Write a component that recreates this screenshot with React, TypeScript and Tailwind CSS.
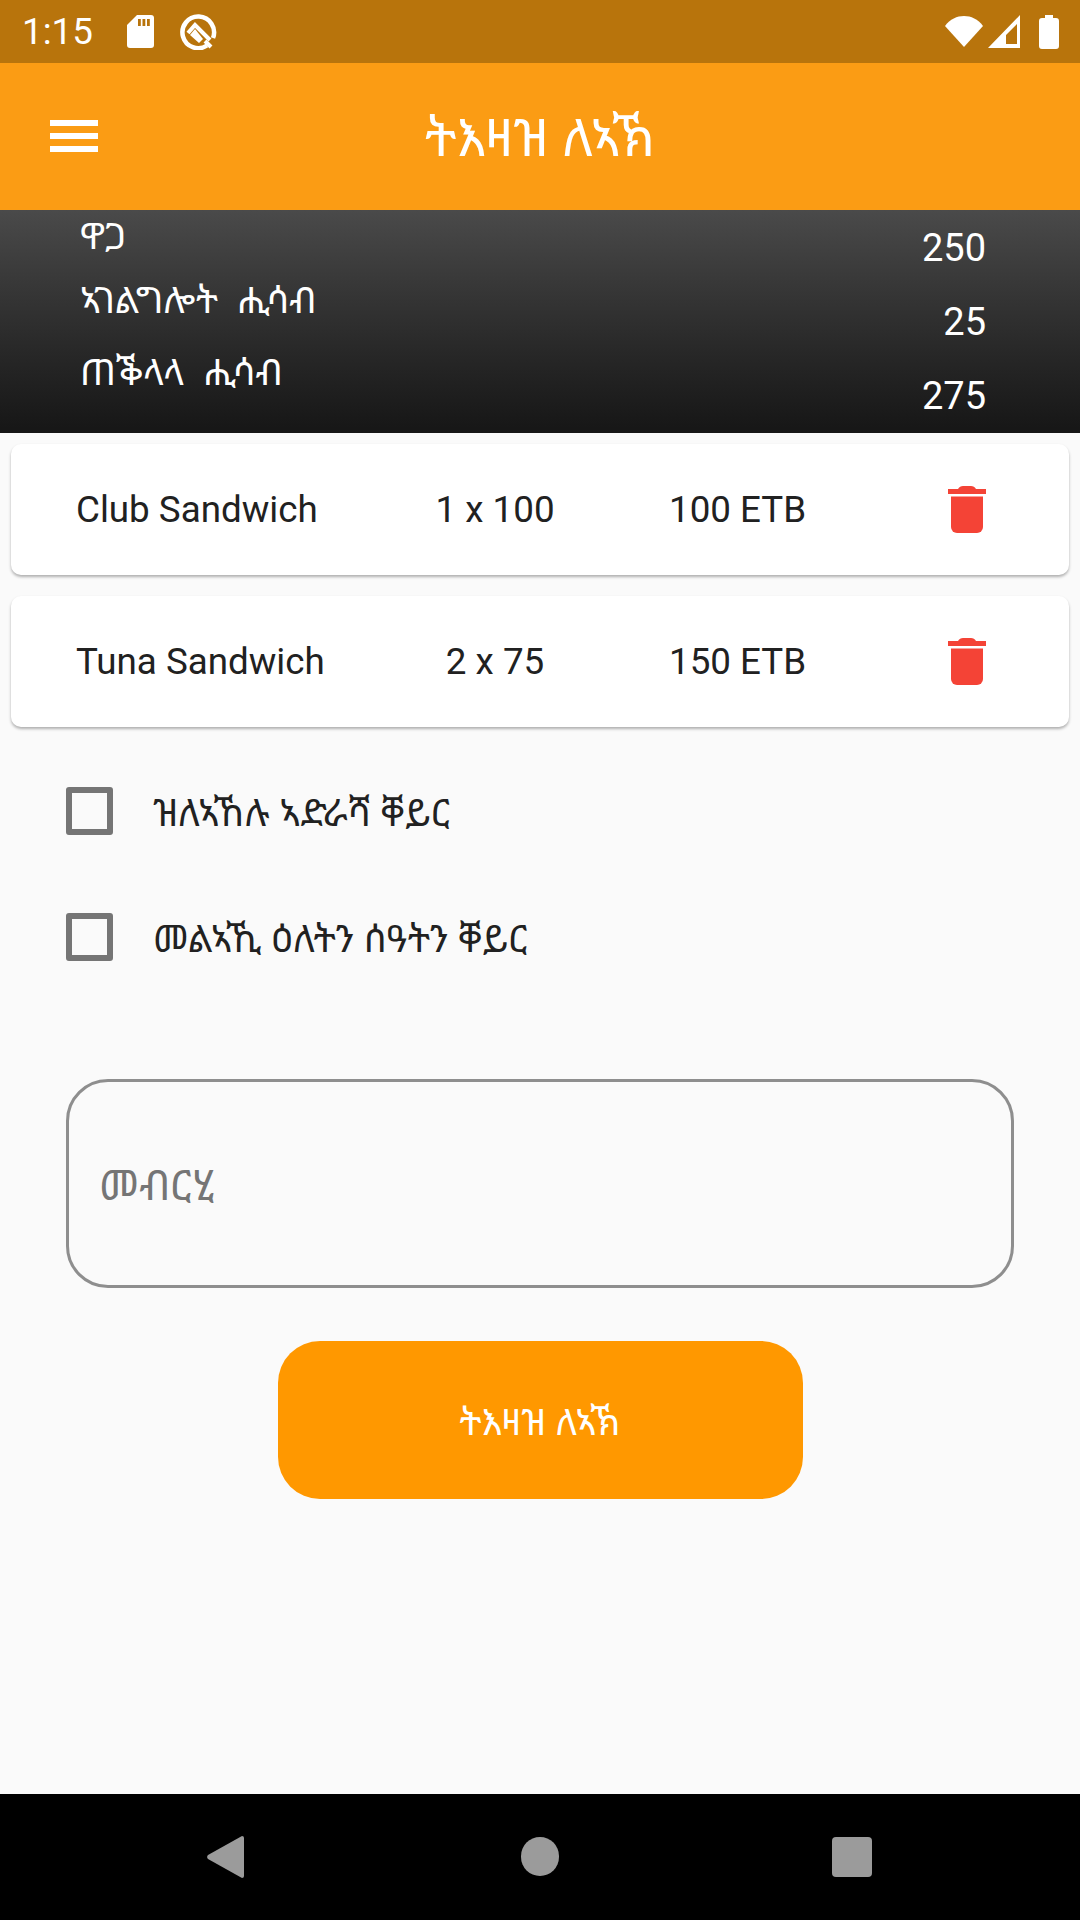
import React from "react";

const ETH = { fontFamily: '"Noto Sans Ethiopic","Abyssinica SIL","DejaVu Sans","Noto Sans",sans-serif' };

function Trash() {
  return (
    <svg width="38" height="47" viewBox="0 0 38 47" fill="#f44336">
      <path d="M0 3h10c1-2 3-3 5-3h8c2 0 4 1 5 3h10v5H0z" />
      <path d="M3 10.500h32V41a6 6 0 0 1-6 6H9a6 6 0 0 1-6-6z" />
    </svg>
  );
}

function Item({ name, qty, total }: { name: string; qty: string; total: string }) {
  return (
    <div className="h-[131px] bg-white rounded-[10px] shadow-[0_2px_3px_rgba(0,0,0,0.3)] flex items-center text-[36.75px] text-[#212121] font-['Roboto',sans-serif]">
      <div className="w-[367px] pl-[65px]">{name}</div>
      <div className="w-[234px] text-center">{qty}</div>
      <div className="w-[336px] pl-[57px]">{total}</div>
      <Trash />
    </div>
  );
}

function Check({ label }: { label: string }) {
  return (
    <div className="flex items-center h-[48px] pl-[66px]">
      <div className="w-[47px] h-[48px] border-[6px] border-[#757575] rounded-[3px]" />
      <div className="ml-[40px] mt-[2px] text-[37.3px] text-[#212121]" style={ETH}>{label}</div>
    </div>
  );
}

export default function App() {
  return (
    <div className="w-[1080px] h-[1920px] flex flex-col bg-[#fafafa] overflow-hidden">
      <div className="h-[63px] bg-[#b8740c] flex items-center justify-between pl-[22px] pr-[21px] text-white">
        <div className="flex items-center">
          <span className="text-[36.75px] font-['Roboto',sans-serif] w-[105px]">1:15</span>
          <svg width="27" height="33" viewBox="0 0 27 33" fill="#fff">
            <path d="M10 0h14a3 3 0 0 1 3 3v27a3 3 0 0 1-3 3H3a3 3 0 0 1-3-3V10z" />
            <path d="M11 4h2.800v7H11zM15.500 4h2.800v7h-2.800zM20 4h2.800v7H20z" fill="#b8740c" />
          </svg>
          <svg className="ml-[26px]" width="37" height="37" viewBox="0 0 37 37" fill="none" stroke="#fff">
            <path d="M27 32.500A15.800 15.800 0 1 1 33 25" strokeWidth="4.500" />
            <path d="M8 20 15 12 30 27" strokeWidth="4" />
            <path d="M10 22l5-6 8 10-4 4z" fill="#fff" strokeWidth="0" />
            <path d="M25 28l6 6" strokeWidth="4" />
          </svg>
        </div>
        <div className="flex items-center">
          <svg width="38" height="31" viewBox="0 0 38 31" fill="#fff"><path d="M0 10C5 3 12 0 19 0s14 3 19 10L19 31z" /></svg>
          <svg className="ml-[5px]" width="32" height="33" viewBox="0 0 32 33" fill="#fff"><path fillRule="evenodd" d="M32 0v33H0zM29 9 18 20v9h11z" /></svg>
          <svg className="ml-[19px]" width="20" height="34" viewBox="0 0 20 34" fill="#fff"><path d="M6 0h8v3h3a3 3 0 0 1 3 3v25a3 3 0 0 1-3 3H3a3 3 0 0 1-3-3V6a3 3 0 0 1 3-3h3z" /></svg>
        </div>
      </div>

      <div className="h-[147px] bg-[#fb9c14] relative flex items-center justify-center text-white">
        <div className="absolute left-[50px] top-[57px] w-[48px] flex flex-col gap-[7px]">
          <div className="h-[6px] bg-white" />
          <div className="h-[6px] bg-white" />
          <div className="h-[6px] bg-white" />
        </div>
        <div className="text-[52.5px]" style={ETH}>ትእዛዝ ለኣኽ</div>
      </div>

      <div className="h-[223px] bg-gradient-to-b from-[#4a4a4a] to-[#161616] flex justify-between pl-[80px] pr-[94px] text-white text-[36.75px]" style={ETH}>
        <div className="flex flex-col pt-[1px] gap-[16px] leading-[48px] whitespace-pre">
          <div>ዋጋ</div>
          <div>ኣገልግሎት  ሒሳብ</div>
          <div className="mt-[8px]">ጠቕላላ  ሒሳብ</div>
        </div>
        <div className="flex flex-col items-end pt-[14px] gap-[26px] leading-[48px] text-[38px] font-['Roboto',sans-serif]">
          <div>250</div>
          <div>25</div>
          <div>275</div>
        </div>
      </div>

      <div className="flex flex-col gap-[21px] px-[11px] pt-[11px]">
        <Item name="Club Sandwich" qty="1 x 100" total="100 ETB" />
        <Item name="Tuna Sandwich" qty="2 x 75" total="150 ETB" />
      </div>

      <div className="flex flex-col gap-[78px] mt-[60px]">
        <Check label="ዝለኣኸሉ ኣድራሻ ቐይር" />
        <Check label="መልኣኺ ዕለትን ሰዓትን ቐይር" />
      </div>

      <div className="mx-[66px] mt-[118px] h-[209px] border-[3px] border-[#8e8e8e] rounded-[42px] flex items-center pl-[30px] text-[42px] text-[#757575]" style={ETH}>መብርሂ</div>

      <div className="self-center mt-[53px] w-[525px] h-[158px] rounded-[42px] bg-[#ff9800] flex items-center justify-center pt-[4px] text-white text-[36.75px]" style={ETH}>ትእዛዝ ለኣኽ</div>

      <div className="mt-auto h-[126px] bg-black flex items-center relative">
        <svg className="absolute left-[207px] top-[42px]" width="37" height="42" viewBox="0 0 37 42" fill="#9b9b9b"><path d="M35 0a2 2 0 0 1 2 2v38a2 2 0 0 1-2 2L1 23a3 3 0 0 1 0-4z" /></svg>
        <div className="absolute left-[521px] top-[43px] w-[38px] h-[39px] rounded-full bg-[#9b9b9b]" />
        <div className="absolute left-[832px] top-[43px] w-[40px] h-[40px] rounded-[4px] bg-[#9b9b9b]" />
      </div>
    </div>
  );
}
